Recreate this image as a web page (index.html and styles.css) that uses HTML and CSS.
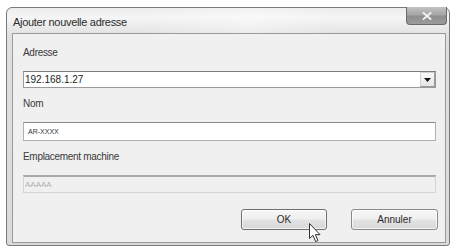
FILE: index.html
```html
<!DOCTYPE html>
<html lang="fr">
<head>
  <meta charset="UTF-8">
  <title>Ajouter nouvelle adresse</title>
  <link rel="stylesheet" href="styles.css">
</head>
<body>
  <div class="dialog">
    <div class="titlebar">
      <span class="title">Ajouter nouvelle adresse</span>
      <div class="close">
        <svg width="10" height="8" viewBox="0 0 10 8">
          <path d="M1.5 1 L8.5 7 M8.5 1 L1.5 7" stroke="#f4f4f4" stroke-width="1.8" stroke-linecap="square"/>
        </svg>
      </div>
    </div>

    <div class="client">
      <div class="field">
        <div class="label">Adresse</div>
        <div class="combo">
          <span class="combo-text">192.168.1.27</span>
          <span class="combo-btn">
            <svg width="7" height="4" viewBox="0 0 7 4"><path d="M0 0 H7 L3.5 4 Z" fill="#111"/></svg>
          </span>
        </div>
      </div>

      <div class="field">
        <div class="label">Nom</div>
        <div class="textbox name">AR-XXXX</div>
      </div>

      <div class="field">
        <div class="label">Emplacement machine</div>
        <div class="textbox disabled">AAAAA</div>
      </div>

      <div class="actions">
        <div class="btn default">OK</div>
        <div class="btn">Annuler</div>
        <!-- mouse pointer over the OK button -->
        <svg class="pointer" width="13" height="20" viewBox="0 0 13 20">
          <path d="M0.5 0.5 L0.5 15.5 L4 12.3 L6.6 18.6 L8.9 17.6 L6.4 11.6 L11 11.6 Z" fill="#fff" stroke="#333" stroke-width="1" stroke-linejoin="round"/>
        </svg>
      </div>
    </div>
  </div>
</body>
</html>
```

FILE: styles.css
```css
/* Basic Reset */
* {
  margin: 0;
  padding: 0;
  box-sizing: border-box;
}

body {
  background: #fff;
  font-family: "Liberation Sans", Arial, sans-serif;
  color: #333;
}

/* Window frame */
.dialog {
  margin: 7px 0 0 6px;
  width: 444px;
  height: 239px;
  padding: 0 3px 2px 5px;
  display: flex;
  flex-direction: column;
  border: 1px solid #7a7a7a;
  border-radius: 6px 6px 3px 3px;
  background: linear-gradient(180deg, #ececec 0%, #f5f5f5 4%, #e0e0e0 12%, #dadada 100%);
}

.titlebar {
  height: 25px;
  display: flex;
  justify-content: space-between;
  align-items: flex-start;
  background: linear-gradient(90deg, rgba(255,255,255,0) 30%, rgba(255,255,255,0.35) 55%, rgba(255,255,255,0) 75%);
}

.title {
  margin: 7px 0 0 1px;
  font-size: 11px;
  line-height: 14px;
  letter-spacing: -0.3px;
  color: #2a2a2a;
}

.close {
  width: 41px;
  height: 18px;
  margin: -1px -1px 0 0;
  display: flex;
  justify-content: center;
  align-items: center;
  border: 1px solid #6a6a6a;
  border-top: none;
  border-radius: 0 0 4px 4px;
  background: linear-gradient(180deg, #c2c2c2 0%, #a6a6a6 45%, #8e8e8e 55%, #9c9c9c 100%);
}

/* Client area */
.client {
  flex: 1;
  padding: 12px 9px 0 10px;
  border: 1px solid #999;
  background: #f0f0f0;
}

.field + .field {
  margin-top: 9px;
}

.label {
  font-size: 10px;
  line-height: 14px;
  letter-spacing: -0.3px;
  margin-bottom: 11px;
  color: #3a3a3a;
}

.combo {
  height: 17px;
  display: flex;
  align-items: center;
  background: #fff;
  border: 1px solid #9a9a9a;
  border-top-color: #7a7a7a;
}

.combo-text {
  flex: 1;
  padding-left: 1px;
  font-size: 10px;
  color: #222;
}

.combo-btn {
  width: 15px;
  height: 15px;
  display: flex;
  justify-content: center;
  align-items: center;
  border: 1px solid #d0d0d0;
  border-right-color: #9a9a9a;
  border-bottom-color: #9a9a9a;
  background: linear-gradient(180deg, #f8f8f8, #e6e6e6);
}

.textbox {
  display: flex;
  align-items: center;
  background: #fff;
  border: 1px solid #b0b0b0;
  border-top-color: #8a8a8a;
}

.textbox.name {
  height: 19px;
  padding-left: 4px;
  font-size: 7px;
  color: #333;
}

.textbox.disabled {
  height: 18px;
  padding-left: 1px;
  font-size: 8px;
  color: #b0b0b0;
  background: #f0f0f0;
  border-color: #d4d4d4;
  border-top: 2px solid #a8a8a8;
}

/* Buttons */
.actions {
  position: relative;
  display: flex;
  justify-content: flex-end;
  gap: 24px;
  margin-top: 16px;
  margin-right: -2px;
}

.btn {
  width: 87px;
  height: 21px;
  display: flex;
  justify-content: center;
  align-items: center;
  font-size: 10px;
  color: #2a2a2a;
  border: 1px solid #8a8a8a;
  border-radius: 3px;
  background: linear-gradient(180deg, #f6f6f6 0%, #efefef 48%, #e3e3e3 52%, #d8d8d8 100%);
  box-shadow: inset 0 0 0 1px rgba(255,255,255,0.7);
}

.btn.default {
  width: 86px;
  border-color: #6e6e6e;
}

.pointer {
  position: absolute;
  left: 286px;
  top: 14px;
}
```
